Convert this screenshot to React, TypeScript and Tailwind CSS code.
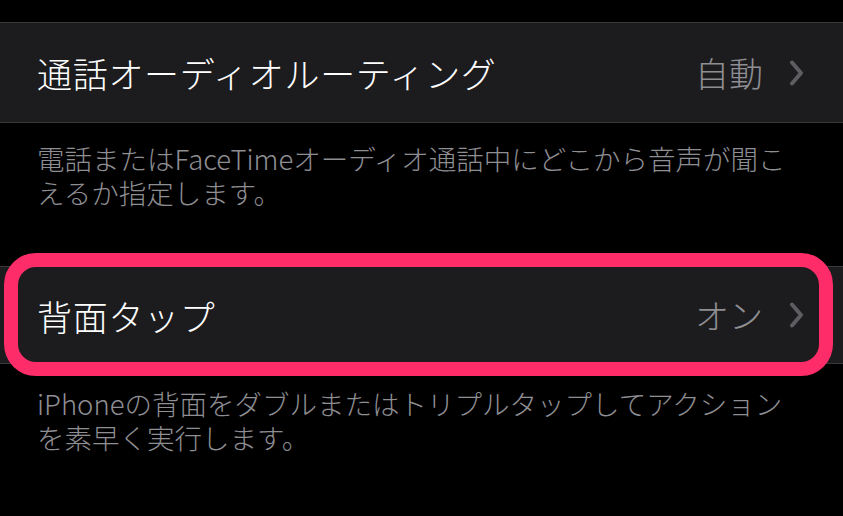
const Chevron = () => (
  <svg width="15" height="26" viewBox="0 0 15 26" fill="none" className="shrink-0">
    <polyline
      points="3,2.5 12,13 3,23.5"
      stroke="#5c5c61"
      strokeWidth="4"
      strokeLinecap="round"
      strokeLinejoin="round"
    />
  </svg>
);

const Row = ({ label, value }: { label: string; value: string }) => (
  <div className="flex h-full items-center justify-between pl-[37px] pr-[39px]">
    <span className="text-[35px] font-light leading-none tracking-[0.02em] text-white">{label}</span>
    <div className="flex items-center gap-[26px]">
      <span className="text-[34px] font-light leading-none text-[#8e8e93]">{value}</span>
      <Chevron />
    </div>
  </div>
);

export default function App() {
  return (
    <div
      className="h-[516px] w-[843px] overflow-hidden bg-black pt-[22px]"
      style={{ fontFamily: '"Noto Sans CJK JP", "Noto Sans", sans-serif' }}
    >
      {/* Call audio routing */}
      <div className="h-[101px] border-y border-[#38383a] bg-[#1c1c1e]">
        <Row label="通話オーディオルーティング" value="自動" />
      </div>
      <div className="px-[37px] pt-[18px] text-[27.5px] font-light leading-[34px] text-[#8e8e93]">
        <p>電話またはFaceTimeオーディオ通話中にどこから音声が聞こ</p>
        <p>えるか指定します。</p>
      </div>

      {/* Back tap, highlighted */}
      <div className="relative mt-[57px] h-[98px] border-y border-[#38383a] bg-[#1c1c1e]">
        <Row label="背面タップ" value="オン" />
        <div className="pointer-events-none absolute left-[4px] top-[-14px] h-[123px] w-[829px] rounded-[32px] border-[14px] border-[#fe2d6a]" />
      </div>
      <div className="px-[37px] pt-[22px] text-[27.5px] font-light leading-[34px] text-[#8e8e93]">
        <p>iPhoneの背面をダブルまたはトリプルタップしてアクション</p>
        <p>を素早く実行します。</p>
      </div>
    </div>
  );
}
